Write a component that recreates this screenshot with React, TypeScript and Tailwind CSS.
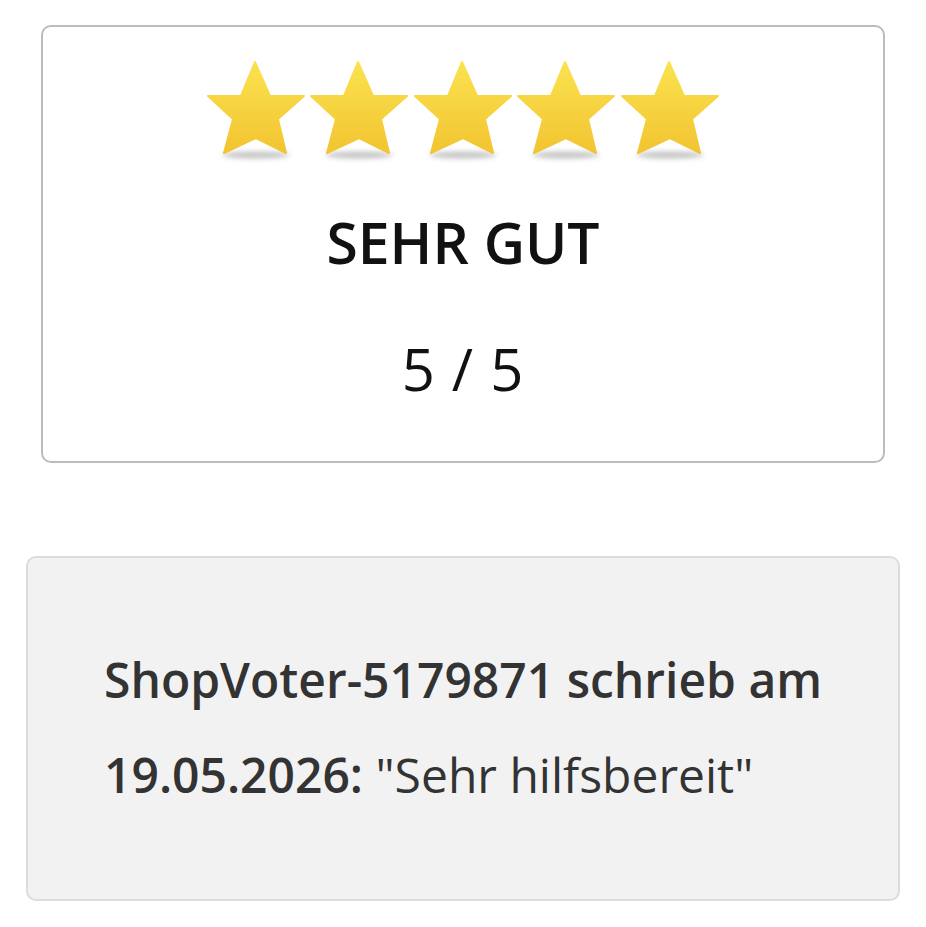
import React from 'react';

const Star: React.FC<{ id: number }> = ({ id }) => (
  <svg width="100" height="104" viewBox="-2 -2 100 104" className="shrink-0">
    <defs>
      <linearGradient id={`sg${id}`} x1="0" y1="0" x2="0" y2="1">
        <stop offset="0" stopColor="#fbe24f" />
        <stop offset="1" stopColor="#f2c431" />
      </linearGradient>
      <filter id={`sb${id}`} x="-50%" y="-200%" width="200%" height="500%">
        <feGaussianBlur stdDeviation="2.5" />
      </filter>
    </defs>
    <ellipse cx="48" cy="93" rx="34" ry="3.5" fill="#c4c4c4" filter={`url(#sb${id})`} />
    <polygon
      points="47,0 62,34 96,34 70,57 78,91 48,76 16,91 25,57 0,34 33,34"
      fill={`url(#sg${id})`}
      stroke={`url(#sg${id})`}
      strokeWidth="2"
      strokeLinejoin="round"
    />
  </svg>
);

export default function App() {
  return (
    <div className="w-[926px] bg-white pt-[25px] pb-[26px]" style={{ fontFamily: '"Open Sans", sans-serif' }}>
      <div className="mx-[41px] h-[438px] rounded-[10px] border-2 border-[#bcbcbc] bg-white flex flex-col items-center pt-[33px]">
        <div className="flex gap-[3.5px] ml-[-1px]">
          {[0, 1, 2, 3, 4].map((i) => (
            <Star key={i} id={i} />
          ))}
        </div>
        <div className="mt-[38px] text-[57px] leading-[80px] font-semibold text-[#111]">SEHR GUT</div>
        <div className="mt-[47px] text-[58px] leading-[80px] text-[#111] tracking-[1px]">5 / 5</div>
      </div>
      <div className="mt-[93px] mx-[26px] h-[345px] rounded-[10px] border-2 border-[#dcdcdc] bg-[#f2f2f2] pl-[76px] pr-[40px] pt-[74px]">
        <p className="text-[48px] leading-[95px] text-[#333]">
          <span className="font-semibold">ShopVoter-5179871 schrieb am</span>{' '}
          <span className="font-semibold">19.05.2026:</span> "Sehr hilfsbereit"
        </p>
      </div>
    </div>
  );
}
